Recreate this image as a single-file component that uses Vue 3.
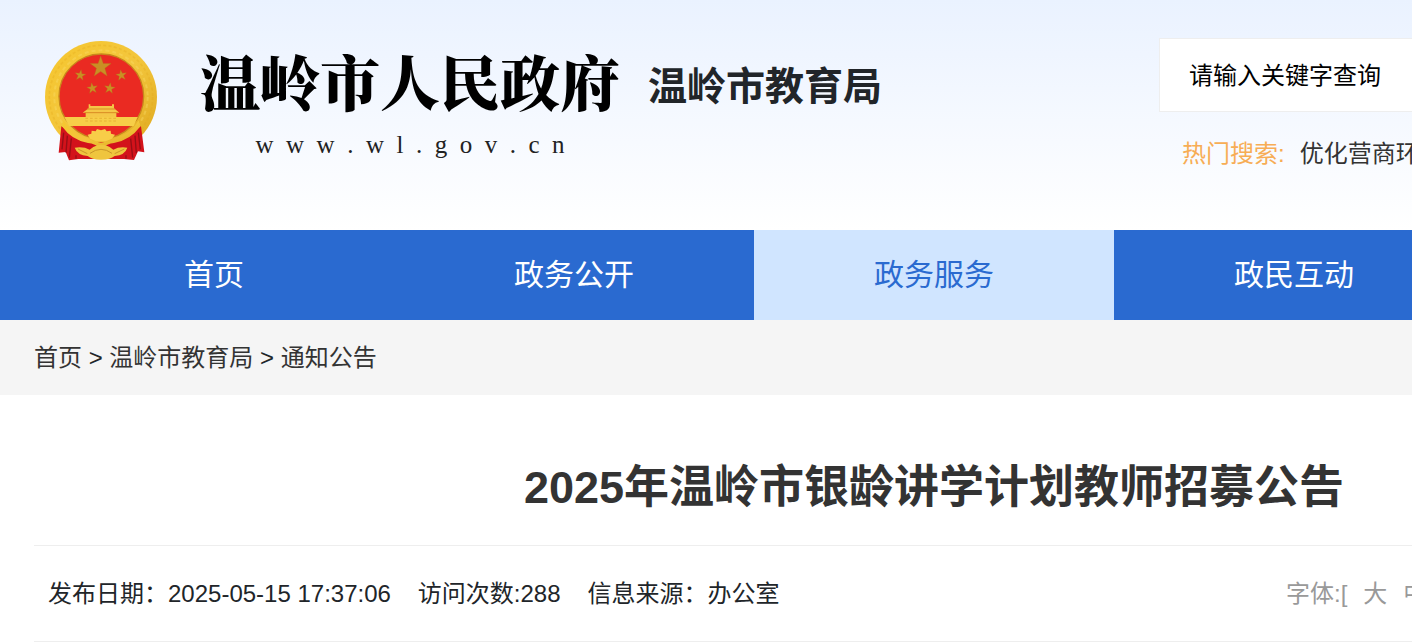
<template>
  <div class="page">
    <header class="header">
      <div class="container header-inner">
        <a class="brand" href="#" aria-label="温岭市人民政府">
          <svg class="emblem" viewBox="42 27 342 363" aria-hidden="true">
            <defs>
              <linearGradient id="gold" x1="0" y1="0" x2="1" y2="1">
                <stop offset="0" stop-color="#f6c72f" />
                <stop offset="0.5" stop-color="#f3c63c" />
                <stop offset="1" stop-color="#dda61d" />
              </linearGradient>
            </defs>
            <circle cx="213" cy="198" r="168" fill="url(#gold)" />
            <circle cx="213" cy="198" r="155" fill="none" stroke="#e0a51c" stroke-width="5" stroke-dasharray="9 7" opacity="0.3" />
            <circle cx="213" cy="198" r="140" fill="none" stroke="#fbdc69" stroke-width="6" stroke-dasharray="12 9" opacity="0.4" />
            <circle cx="214" cy="196" r="127" fill="#ea2a22" stroke="#c8871c" stroke-width="4" />
            <g fill="#c98f24" stroke="#b5701a" stroke-width="1">
              <polygon v-for="(star, i) in stars" :key="i" :points="starPoints(star)" />
            </g>
            <path d="M176 220h5v5h65v-5h6v12l16 13h-9v13h-92v-13h-9l18-13z" fill="#f5c747" />
            <path d="M171 234h84M164 245h99" stroke="#d98b24" stroke-width="3" />
            <path d="M103 258h220l-12 27H117z" fill="#f7ce48" />
            <path d="M166 262h94M166 270h94" stroke="#dfa52c" stroke-width="2" stroke-dasharray="8 6" />
            <path d="M94 286l23 13q40 35 96 35t98-35l22-13 10 78-19-3-12 26-30-3H145l-28 4-10-25-21 2z" fill="#d3121b" />
            <path d="M100 268q24 42 74 53 10 9 39 14 30-5 40-14 50-11 73-53l4 19q-28 39-78 49-20 2-39 17-18-15-39-17-50-10-77-49z" fill="url(#gold)" />
            <path d="M180 323l-7-12 11-3 1-9 12 2 4-7 12 4 12-4 5 7 12-2 1 9 12 3-9 12-19 8h-29z" fill="#f8cd48" />
            <path d="M134 350q27-4 45 6l11-8 12-5 12-2 13 2 12 5 11 8q18-10 42-6-7 22-38 25-12 11-41 11-28 0-40-11-31-3-39-25z" fill="#efc53e" />
            <path d="M144 354l28 14M283 354l-29 14M180 367q33-24 66 0" fill="none" stroke="#c99628" stroke-width="3" />
            <path d="M101 305l-5 50M112 314l-4 51M124 322l-6 58M138 373v10M325 305l6 50M315 314l4 52M302 323l6 57M288 373v10" fill="none" stroke="#960e16" stroke-width="4" />
          </svg>
          <span class="brand-text">
            <span class="brand-name">温岭市人民政府</span>
            <span class="brand-site">{{ site }}</span>
          </span>
        </a>
        <h2 class="bureau">温岭市教育局</h2>
        <form class="search" @submit.prevent>
          <input v-model="keyword" class="search-input" type="text" aria-label="关键字" placeholder="请输入关键字查询" />
          <div class="hot">
            <span class="hot-label">热门搜索:</span>
            <a href="#">优化营商环境</a>
          </div>
        </form>
      </div>
    </header>

    <nav class="nav">
      <div class="container nav-inner">
        <a
          v-for="item in navItems"
          :key="item"
          href="#"
          class="nav-link"
          :class="item === current ? 'active' : ''"
        >{{ item }}</a>
      </div>
    </nav>

    <div class="crumbs">
      <div class="container">
        <a href="#">首页</a> &gt; <a href="#">温岭市教育局</a> &gt; <a href="#">通知公告</a>
      </div>
    </div>

    <main class="container">
      <h1 class="title">2025年温岭市银龄讲学计划教师招募公告</h1>
      <div class="meta">
        <span>发布日期：2025-05-15 17:37:06</span>
        <span>访问次数:288</span>
        <span>信息来源：办公室</span>
        <div class="font-size">
          <span>字体:[</span>
          <button v-for="size in sizes" :key="size" type="button">{{ size }}</button>
          <span>]</span>
        </div>
      </div>
    </main>
  </div>
</template>

<script setup>
import { ref } from 'vue'

const keyword = ref('')
const current = ref('政务服务')
const navItems = ['首页', '政务公开', '政务服务', '政民互动']
const sizes = ['大', '中', '小']

// spaced-out address under the site name
const site = 'www.wl.gov.cn'.split('').join('  ')

const stars = [
  { x: 212, y: 108, r: 33, turn: 0 },
  { x: 151, y: 133, r: 17, turn: 8 },
  { x: 274, y: 133, r: 17, turn: -8 },
  { x: 187, y: 172, r: 17, turn: -8 },
  { x: 239, y: 172, r: 17, turn: 8 }
]

const starPoints = ({ x, y, r, turn }) => {
  const out = []
  for (let i = 0; i < 10; i++) {
    const radius = i % 2 ? r * 0.4 : r
    const angle = ((i * 36 - 90 + turn) * Math.PI) / 180
    out.push(`${(x + radius * Math.cos(angle)).toFixed(1)},${(y + radius * Math.sin(angle)).toFixed(1)}`)
  }
  return out.join(' ')
}
</script>

<style>
body {
  margin: 0;
  background: #fff;
  overflow-x: hidden;
}
</style>

<style scoped>
.page {
  overflow: hidden;
  font-family: "Liberation Sans", Arial, "Noto Sans CJK SC", sans-serif;
  font-size: 24px;
  line-height: 36px;
  color: #212529;
}

.page a {
  color: #333;
  text-decoration: none;
}

/* wide desktop column, it runs past the right edge of narrow windows */
.container {
  box-sizing: border-box;
  min-width: 1800px;
  margin-left: 34px;
}

.header {
  background: linear-gradient(#eaf2ff, #fff);
}

.header-inner {
  display: flex;
  align-items: flex-start;
  height: 230px;
  box-sizing: border-box;
  padding-top: 38px;
}

.page .brand {
  display: flex;
  gap: 42px;
  padding-left: 10px;
  color: #000;
}

.emblem {
  width: 114px;
  height: 121px;
  margin-top: 2px;
}

.brand-text {
  display: flex;
  flex-direction: column;
  align-items: center;
}

.brand-name {
  margin-top: 6px;
  font-family: "Noto Serif CJK SC", "Noto Sans CJK SC", serif;
  font-size: 60px;
  font-weight: 900;
  line-height: 72px;
}

.brand-site {
  margin-top: 13px;
  color: #222;
  font-family: "Liberation Serif", serif;
  font-size: 25px;
  line-height: 32px;
  white-space: pre;
}

.bureau {
  margin: 21px 0 0 28px;
  font-size: 39px;
  font-weight: 700;
  line-height: 56px;
}

.search {
  flex: 1;
  margin-left: 277px;
}

.search-input {
  display: block;
  box-sizing: border-box;
  width: 100%;
  height: 74px;
  padding: 2px 29px 0;
  border: 1px solid #eee;
  background: #fff;
  font-family: inherit;
  font-size: 24px;
  color: #000;
}

.search-input:focus {
  outline: none;
}

.search-input::placeholder {
  color: #000;
  opacity: 1;
}

.hot {
  display: flex;
  gap: 15px;
  margin-top: 24px;
  padding-left: 23px;
}

.hot-label {
  color: #f7ad55;
}

.nav {
  background: #2a6ad0;
}

.nav-inner {
  display: grid;
  grid-template-columns: repeat(5, 1fr);
}

.page .nav-link {
  color: #fff;
  font-size: 30px;
  line-height: 90px;
  text-align: center;
}

.page .nav-link.active {
  background: #d0e5ff;
  color: #2a6ad0;
}

.crumbs {
  background: #f5f5f5;
  line-height: 75px;
}

.title {
  margin: 0;
  padding: 60px 0 24px;
  font-size: 45px;
  font-weight: 700;
  line-height: 66px;
  text-align: center;
  color: #333;
}

.meta {
  display: flex;
  align-items: center;
  gap: 27px;
  padding: 0 344px 0 14px;
  border-top: 1px solid #eee;
  border-bottom: 1px solid #eee;
  line-height: 95px;
}

.font-size {
  display: flex;
  gap: 16px;
  margin-left: auto;
  color: #999;
}

.font-size button {
  padding: 0;
  border: 0;
  background: none;
  color: inherit;
  font: inherit;
  cursor: pointer;
}
</style>
